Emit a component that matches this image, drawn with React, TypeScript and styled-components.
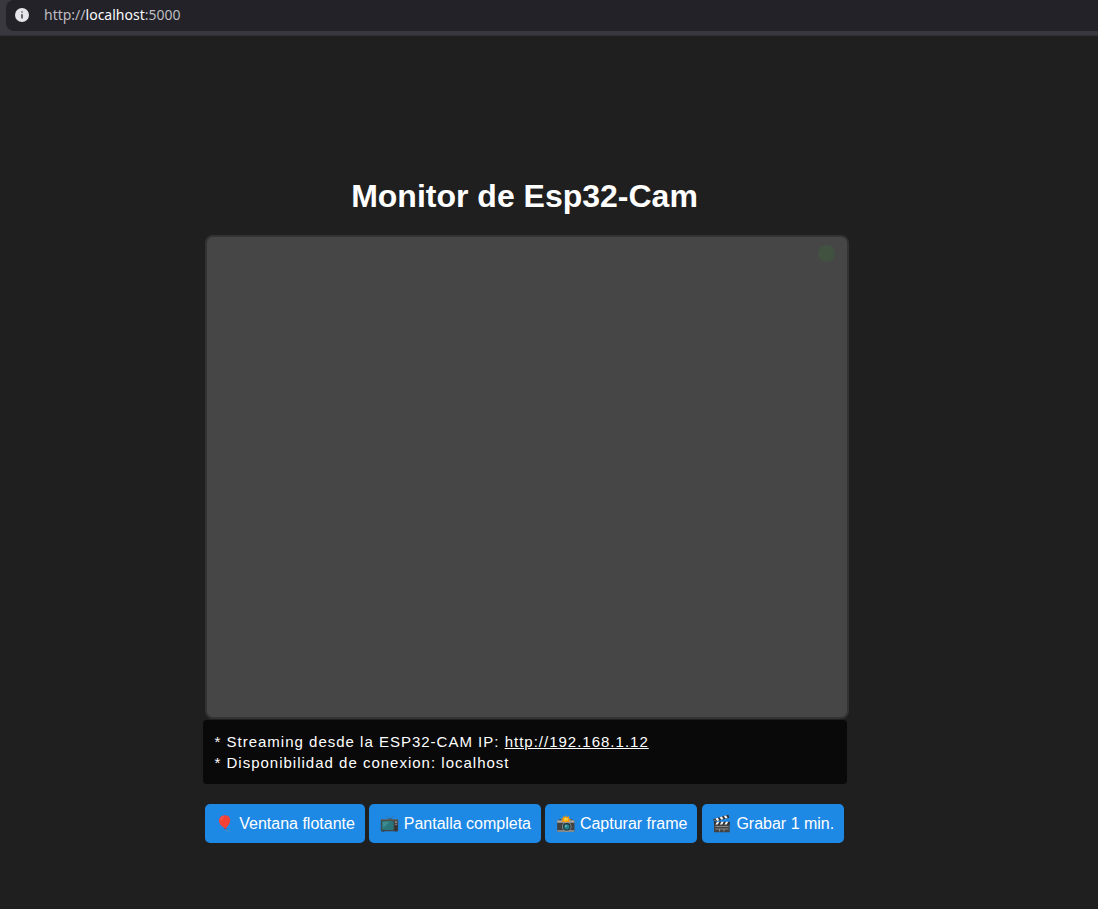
import React from "react";
import styled, { createGlobalStyle } from "styled-components";

const GlobalStyle = createGlobalStyle`
  * { box-sizing: border-box; }
  body {
    margin: 0;
    background: #1f1f1f;
    color: #fff;
    font-family: "Liberation Sans", Arial, sans-serif;
    font-size: 16px;
  }
`;

const BrowserBar = styled.header`
  height: 36px;
  padding-left: 6px;
  background: #39383e;
  border-bottom: 1px solid #302f34;
`;

const AddressField = styled.div`
  display: flex;
  align-items: center;
  gap: 15px;
  height: 31px;
  padding: 0 9px 1px;
  background: #232228;
  border-radius: 8px 0 0 8px;
  color: #bdbcc2;
  font: 14px/20px "Noto Sans", "Open Sans", sans-serif;
`;

const Host = styled.span`
  color: #fbfbfe;
`;

const Page = styled.main`
  display: flex;
  flex-direction: column;
  align-items: center;
  padding: 140px 49px 64px 0;
`;

const Monitor = styled.section`
  width: 644px;
  max-width: 100%;
`;

const Title = styled.h1`
  margin: 0 0 19px;
  font-size: 32px;
  line-height: 40px;
  text-align: center;
`;

const Screen = styled.div`
  display: flex;
  justify-content: flex-end;
  aspect-ratio: 161 / 121;
  margin: 0 -2px 0 2px;
  padding: 8px 12px;
  background: #464646;
  border: 2px solid #333;
  border-radius: 8px;
`;

const StatusDot = styled.span`
  width: 17px;
  height: 17px;
  border-radius: 50%;
  background: #415241;
`;

const Info = styled.div`
  margin-top: 1px;
  padding: 11px 12px;
  background: #090909;
  border-radius: 4px;
  font-size: 15px;
  line-height: 21px;
  letter-spacing: 1px;
`;

const InfoLine = styled.p`
  margin: 0;
`;

const CameraLink = styled.a`
  color: #fff;
`;

const Actions = styled.div`
  margin-top: 20px;
  text-align: center;
`;

const ActionButton = styled.button`
  height: 39px;
  padding: 0 10px;
  border: 0;
  border-radius: 5px;
  background: #1e88e5;
  color: #fff;
  font: inherit;
  line-height: 20px;
  white-space: nowrap;
  vertical-align: top;
  cursor: pointer;
`;

const Glyph = styled.svg`
  width: 20px;
  height: 20px;
  vertical-align: top;
`;

const InfoIcon = () => (
  <svg width="14" height="14" viewBox="0 0 14 14" aria-hidden="true">
    <circle cx="7" cy="7" r="7" fill="#e6e5ea" />
    <rect x="6.200" y="3.200" width="1.600" height="1.600" rx=".8" fill="#46454b" />
    <rect x="6.200" y="6" width="1.600" height="4.600" rx=".7" fill="#46454b" />
  </svg>
);

const Balloon = () => (
  <Glyph viewBox="0 0 20 20" aria-hidden="true">
    <path d="M10.500 15.500c.2 1 .6 1.600 1.500 1.500 1.200-.1 1.600.6 3.300.2" fill="none" stroke="#6d91a8" strokeWidth=".6" />
    <path d="M9.700 1.200c3.400-.2 5.700 2.200 5.500 5.300-.2 3-2.200 6-4.400 7.400l.9 1.200H9.300l.6-1.200C6.800 12.800 4.200 10 4 6.700c-.1-3 2.300-5.300 5.700-5.500z" fill="#f44336" />
    <path d="M9.300 15.100l.6-1.200h.9l.9 1.200z" fill="#c62828" />
    <path d="M6 6c.2-1.500 1-2.500 2.200-3" fill="none" stroke="#ff7a70" strokeWidth=".8" strokeLinecap="round" />
  </Glyph>
);

const Television = () => (
  <Glyph viewBox="-1.400 -0.600 20.800 20.800" aria-hidden="true">
    <path d="M6.200 1.500l3.800 4 3.500-4" fill="none" stroke="#546e7a" strokeWidth=".7" />
    <path d="M8 5c.5-1.400 4.500-1.400 5 0z" fill="#37474f" />
    <rect x="0.500" y="5" width="18" height="12.300" rx=".5" fill="#424242" />
    <rect x="0.500" y="5" width="18" height="1" fill="#686461" />
    <rect x="1.500" y="6.600" width="12.300" height="9.400" rx="1.300" fill="#2a747b" />
    <path d="M2.500 8.500C2.500 7.400 4 7.400 6 7.400h4L3.500 13.500c-1 0-1-2-1-5z" fill="#3f8a8e" />
    <circle cx="16.300" cy="7.900" r=".9" fill="#aaa" />
    <circle cx="16.300" cy="10.300" r=".7" fill="#999" />
    <path d="M14.800 12.400h3M14.800 14h3M14.800 15.600h3" stroke="#222" strokeWidth=".7" />
    <path d="M2 17.300h2v.6H2zM15 17.300h2v.6h-2z" fill="#263238" />
  </Glyph>
);

const FlashCamera = () => (
  <Glyph viewBox="-1.200 -1.100 20.800 20.800" aria-hidden="true">
    <path d="M3 4.300h2.500V6H3zM14.500 4.300H17V6h-2.500z" fill="#424242" />
    <rect x="1" y="5.300" width="18" height="12.200" rx="1" fill="#424242" />
    <path d="M1 8V6.300q0-1 1-1h16q1 0 1 1V8z" fill="#a6a6a6" />
    <path d="M1 15.500h18v1q0 1-1 1H2q-1 0-1-1z" fill="#82888a" />
    <circle cx="11" cy="12.200" r="4.900" fill="#9eabb0" />
    <circle cx="11" cy="12.200" r="4.200" fill="#263b42" />
    <circle cx="11" cy="12.200" r="2.700" fill="#26818c" />
    <circle cx="10.200" cy="11.300" r=".9" fill="#80cbc4" />
    <path d="M10 0l1 2.200L13.500 1l-.4 2.500 2.600.8-2.300 1.200.8 2-2.700-.6L10 7.800 8.500 6.600l-2.700.5 1-2L4.700 3.500l2.600-.2L7 1l2.100 1.200z" fill="#ff9800" />
    <path d="M10 2l.7 1.600 1.600-.5-.4 1.400 1 .8-1.700.2-1 1-1-1.100-1.700-.1 1-1-.5-1.400 1.500.4z" fill="#ffd740" />
  </Glyph>
);

const Clapper = () => (
  <Glyph viewBox="0.500 0 20 20" aria-hidden="true">
    <rect x="2.500" y="8" width="15.700" height="10.300" rx=".6" fill="#424242" />
    <path d="M1.800 5L17 .8l.8 2.900L2.500 7.900z" fill="#333" />
    <path d="M4 4.400l2.200-.6 1.500 2.500-2.200.6zM8.200 3.200l2.200-.6 1.500 2.500-2.200.6zM12.400 2.100l2.200-.6 1.500 2.500-2.200.6z" fill="#f5f5f5" />
    <rect x="2.500" y="7.800" width="15.700" height="2.700" fill="#303030" />
    <path d="M5.500 7.800h2.300l-1.600 2.700H3.900zM10 7.800h2.300l-1.600 2.700H8.400zM14.500 7.800h2.300l-1.600 2.700h-2.300z" fill="#f5f5f5" />
    <path d="M3.800 12.500H17M3.800 15H17M8 15v2.500M12.500 15v2.500" stroke="#a7a7a7" strokeWidth=".7" />
    <circle cx="3.500" cy="6.400" r=".6" fill="#aaa" />
  </Glyph>
);

const actions = [
  { label: "Ventana flotante", Icon: Balloon },
  { label: "Pantalla completa", Icon: Television },
  { label: "Capturar frame", Icon: FlashCamera },
  { label: "Grabar 1 min.", Icon: Clapper },
];

export default function App() {
  return (
    <>
      <GlobalStyle />
      <BrowserBar>
        <AddressField>
          <InfoIcon />
          <span>http://<Host>localhost</Host>:5000</span>
        </AddressField>
      </BrowserBar>
      <Page>
        <Monitor>
          <Title>Monitor de Esp32-Cam</Title>
          <Screen>
            <StatusDot />
          </Screen>
          <Info>
            <InfoLine>
              * Streaming desde la ESP32-CAM IP: <CameraLink href="http://192.168.1.12">http://192.168.1.12</CameraLink>
            </InfoLine>
            <InfoLine>* Disponibilidad de conexion: localhost</InfoLine>
          </Info>
          <Actions>
            {actions.map(({ label, Icon }) => (
              <React.Fragment key={label}>
                <ActionButton type="button">
                  <Icon /> {label}
                </ActionButton>{" "}
              </React.Fragment>
            ))}
          </Actions>
        </Monitor>
      </Page>
    </>
  );
}
